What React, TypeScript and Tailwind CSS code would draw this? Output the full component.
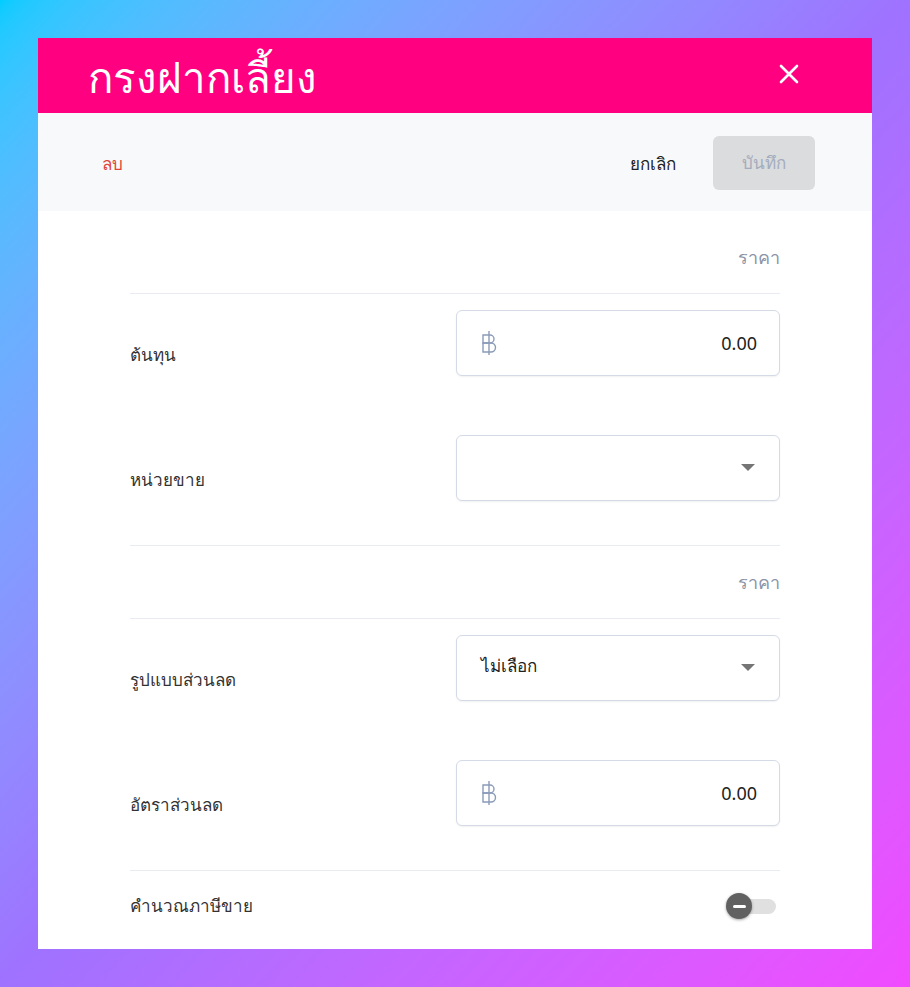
import React from "react";

const BahtIcon: React.FC = () => (
  <svg width="16" height="26" viewBox="0 0 16 26" fill="none" stroke="#8a9bb8" strokeWidth="1.4">
    <path d="M8 1v24" />
    <path d="M2 5h7a4 4 0 0 1 0 8H2z" />
    <path d="M2 13h8a4.5 4.5 0 0 1 0 9H2z" />
  </svg>
);

const Caret: React.FC = () => (
  <svg width="14" height="8" viewBox="0 0 14 8">
    <path d="M0 0h14L7 7z" fill="#757575" />
  </svg>
);

const SectionHead: React.FC<{ first?: boolean }> = ({ first }) => (
  <div
    className={`flex justify-end border-b border-[#e8ecf2] ${first ? "pt-[35px] pb-[25px]" : "pt-[25px] pb-[25px]"}`}
  >
    <span className="text-[18px] leading-[22px] text-[#8a94a6]">ราคา</span>
  </div>
);

const Row: React.FC<{ label: string; children: React.ReactNode }> = ({ label, children }) => (
  <div className="flex items-center h-[66px]">
    <div className="flex-1 pt-[24px] text-[17px] text-[#333]">{label}</div>
    <div className="w-[324px] h-[66px] rounded-md border border-[#d4dbe6] shadow-[0_1px_2px_rgba(0,0,0,0.06)] bg-white flex items-center px-[24px]">
      {children}
    </div>
  </div>
);

export default function App() {
  return (
    <div className="min-h-[987px] w-full p-[38px] bg-gradient-to-br from-[#00ccff] via-[#9f72ff] to-[#f04aff] font-['Noto_Sans',sans-serif]">
      <div className="w-[834px] h-[911px] bg-white overflow-hidden flex flex-col">
        {/* Header */}
        <div className="h-[75px] bg-[#ff0080] flex items-center justify-between pl-[50px] pr-[72px]">
          <h1 className="text-[42px] leading-none text-white pt-[2px]">กรงฝากเลี้ยง</h1>
          <svg width="22" height="22" viewBox="0 0 22 22" stroke="white" strokeWidth="2.6" strokeLinecap="round" className="-mt-[4px]">
            <path d="M3 3l16 16M19 3L3 19" />
          </svg>
        </div>

        {/* Toolbar */}
        <div className="h-[98px] bg-[#f7f9fb] flex items-center pt-[2px] pl-[64px] pr-[57px]">
          <button className="text-[17px] text-[#e0443a] pt-[2px]">ลบ</button>
          <div className="flex-1" />
          <button className="text-[17px] text-[#222] mr-[37px] pt-[2px]">ยกเลิก</button>
          <button className="w-[102px] h-[54px] rounded-md bg-[#dadcde] text-[17px] text-[#a3acbd]">บันทึก</button>
        </div>

        {/* Form */}
        <div className="px-[92px]">
          <SectionHead first />
          <div className="flex flex-col gap-[59px] pt-[16px] pb-[44px] border-b border-[#e8ecf2]">
            <Row label="ต้นทุน">
              <BahtIcon />
              <span className="flex-1 text-right text-[18px] text-[#222] -mr-[2px]">0.00</span>
            </Row>
            <Row label="หน่วยขาย">
              <span className="flex-1" />
              <Caret />
            </Row>
          </div>

          <SectionHead />
          <div className="flex flex-col gap-[59px] pt-[16px] pb-[44px] border-b border-[#e8ecf2]">
            <Row label="รูปแบบส่วนลด">
              <span className="flex-1 text-[17px] text-[#222] -mt-[4px]">ไม่เลือก</span>
              <Caret />
            </Row>
            <Row label="อัตราส่วนลด">
              <BahtIcon />
              <span className="flex-1 text-right text-[18px] text-[#222] -mr-[2px]">0.00</span>
            </Row>
          </div>

          <div className="flex items-center justify-between h-[70px]">
            <span className="text-[17px] text-[#333]">คำนวณภาษีขาย</span>
            <div className="relative w-[50px] h-[26px] mr-[4px] flex items-center">
              <div className="absolute left-[12px] right-0 h-[15px] rounded-full bg-[#e0e0e0]" />
              <div className="absolute left-0 w-[26px] h-[26px] rounded-full bg-[#616161] shadow-[0_1px_3px_rgba(0,0,0,0.35)] flex items-center justify-center">
                <div className="w-[13px] h-[3px] bg-white rounded-sm" />
              </div>
            </div>
          </div>
        </div>
      </div>
    </div>
  );
}
